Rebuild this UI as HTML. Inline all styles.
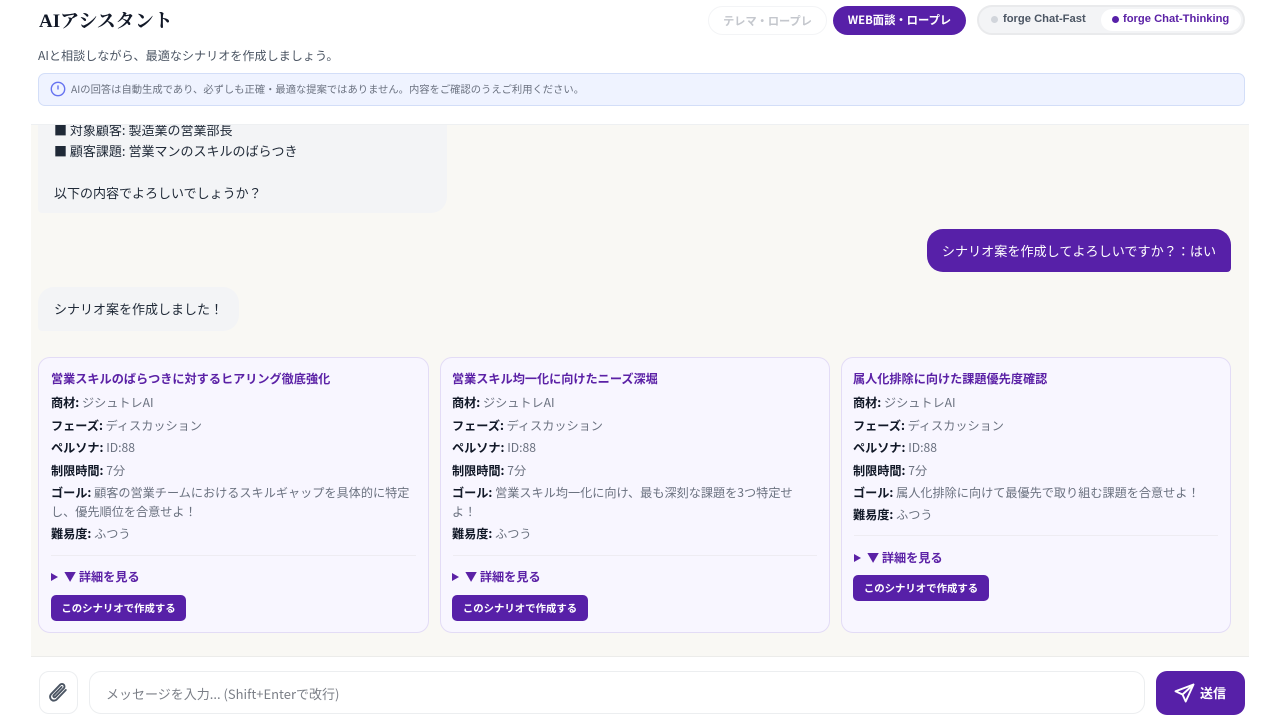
<!DOCTYPE html>
<html lang="ja"><head><meta charset="utf-8"><title>AIアシスタント</title>
<style>
*{box-sizing:border-box}
html,body{margin:0;padding:0;width:1280px;height:720px;overflow:hidden;background:#fff}
body{font-family:"Noto Sans CJK JP","Liberation Sans",sans-serif;color:#374151;position:relative}
.a{position:absolute;white-space:nowrap}
.l{font-family:"Liberation Sans","Noto Sans CJK JP",sans-serif}
.card{position:absolute;top:357px;width:391px;background:#f8f6ff;border:1px solid #e3dcf6;border-radius:12px}
.card .t{position:absolute;left:12px;top:12px;font-size:12.15px;line-height:18px;font-weight:700;color:#5b21a6;white-space:nowrap}
.card .r{position:absolute;left:12px;font-size:12.15px;line-height:19px;color:#6b7280;white-space:nowrap}
.card .r b{color:#111827}
.card .hr{position:absolute;left:12px;right:12px;height:1px;background:#eeecf2}
.card .d{position:absolute;left:12px;font-size:12.15px;line-height:18px;font-weight:700;color:#5b21a6;white-space:nowrap}
.card .d i{display:inline-block;width:0;height:0;border-left:7px solid #5b21a6;border-top:4px solid transparent;border-bottom:4px solid transparent;margin-right:6px}
.card .b{position:absolute;left:12px;width:135px;height:26px;border-radius:5px;background:#5720a8;color:#fff;font-size:10.4px;font-weight:700;line-height:26px;text-align:center}
</style></head><body>
<div class="a" style="left:39px;top:8px;font-family:'Liberation Serif','Noto Serif CJK SC',serif;font-size:19px;line-height:27px;font-weight:700;color:#111827">AIアシスタント</div>
<div class="a" style="left:38px;top:47px;font-size:12.1px;line-height:17px;color:#4b5563">AIと相談しながら、最適なシナリオを作成しましょう。</div>

<div class="a" style="left:708px;top:6px;width:119px;height:29px;border:1px solid #f3f4f6;border-radius:15px;font-size:11.2px;font-weight:700;line-height:28px;text-align:center;color:#c4c7cd">テレマ・ロープレ</div>
<div class="a" style="left:833px;top:6px;width:133px;height:29px;background:#5720a8;border-radius:15px;font-size:11.3px;font-weight:700;line-height:29px;text-align:center;color:#fff">WEB面談・ロープレ</div>
<div class="a" style="left:977px;top:5px;width:268px;height:30px;background:#f3f4f6;border:2px solid #e9eaec;border-radius:15px"></div>
<div class="a" style="left:1101px;top:9px;width:140px;height:22px;background:#fff;border-radius:11px"></div>
<div class="a" style="left:991px;top:16px;width:7px;height:7px;border-radius:50%;background:#d1d5db"></div>
<div class="a l" style="left:1003px;top:11px;font-size:11.2px;line-height:16px;font-weight:700;color:#4b5563">forge Chat-Fast</div>
<div class="a" style="left:1112px;top:16px;width:7px;height:7px;border-radius:50%;background:#5720a8"></div>
<div class="a l" style="left:1123px;top:11px;font-size:11.2px;line-height:16px;font-weight:700;color:#5b21a6">forge Chat-Thinking</div>

<div class="a" style="left:38px;top:73px;width:1207px;height:33px;background:#eff3ff;border:1px solid #d3def8;border-radius:7px"></div>
<svg class="a" style="left:50px;top:81px" width="16" height="16" viewBox="0 0 16 16" fill="none"><circle cx="8" cy="8" r="6.7" stroke="#6673f0" stroke-width="1.4"/><path d="M8 5V8" stroke="#6673f0" stroke-width="1.4" stroke-linecap="round"/></svg>
<div class="a" style="left:71px;top:81px;font-size:10.3px;line-height:15px;color:#6b7280">AIの回答は自動生成であり、必ずしも正確・最適な提案ではありません。内容をご確認のうえご利用ください。</div>

<div class="a" style="left:31px;top:124px;width:1218px;height:533px;background:#f9f8f4;border-top:1px solid #eef0f2;border-bottom:1px solid #ececea;overflow:hidden">
  <div class="a" style="left:7px;top:-40px;width:409px;height:128px;background:#f3f4f6;border-radius:16px 16px 16px 4px"></div>
  <div class="a" style="left:23px;top:-6px;font-size:13px;line-height:21px;color:#1f2937">■ 対象顧客: 製造業の営業部長<br>■ 顧客課題: 営業マンのスキルのばらつき<br><br>以下の内容でよろしいでしょうか？</div>
</div>
<div class="a" style="left:927px;top:229px;width:304px;height:43px;background:#5720a8;border-radius:16px 16px 4px 16px;color:#fff;font-size:13.1px;line-height:43px;text-align:center">シナリオ案を作成してよろしいですか？：はい</div>
<div class="a" style="left:38px;top:287px;width:201px;height:44px;background:#f3f4f6;border-radius:16px 16px 16px 4px;font-size:13px;line-height:44px;padding-left:16px;color:#1f2937">シナリオ案を作成しました！</div>

<div class="card" style="left:38px;height:276px">
  <div class="t">営業スキルのばらつきに対するヒアリング徹底強化</div>
  <div class="r" style="top:35px"><b>商材:</b> ジシュトレAI</div>
  <div class="r" style="top:58px"><b>フェーズ:</b> ディスカッション</div>
  <div class="r" style="top:80px"><b>ペルソナ:</b> ID:88</div>
  <div class="r" style="top:103px"><b>制限時間:</b> 7分</div>
  <div class="r" style="top:125px"><b>ゴール:</b> 顧客の営業チームにおけるスキルギャップを具体的に特定<br>し、優先順位を合意せよ！</div>
  <div class="r" style="top:166px"><b>難易度:</b> ふつう</div>
  <div class="hr" style="top:197px"></div>
  <div class="d" style="top:210px"><i></i>▼ 詳細を見る</div>
  <div class="b" style="top:237px">このシナリオで作成する</div>
</div>
<div class="card" style="left:440px;height:276px;width:390px">
  <div class="t" style="left:11px">営業スキル均一化に向けたニーズ深堀</div>
  <div class="r" style="top:35px;left:11px"><b>商材:</b> ジシュトレAI</div>
  <div class="r" style="top:58px;left:11px"><b>フェーズ:</b> ディスカッション</div>
  <div class="r" style="top:80px;left:11px"><b>ペルソナ:</b> ID:88</div>
  <div class="r" style="top:103px;left:11px"><b>制限時間:</b> 7分</div>
  <div class="r" style="top:125px;left:11px"><b>ゴール:</b> 営業スキル均一化に向け、最も深刻な課題を3つ特定せ<br>よ！</div>
  <div class="r" style="top:166px;left:11px"><b>難易度:</b> ふつう</div>
  <div class="hr" style="top:197px"></div>
  <div class="d" style="top:210px;left:11px"><i></i>▼ 詳細を見る</div>
  <div class="b" style="top:237px;left:11px;width:136px">このシナリオで作成する</div>
</div>
<div class="card" style="left:841px;height:276px;width:390px">
  <div class="t" style="left:11px">属人化排除に向けた課題優先度確認</div>
  <div class="r" style="top:35px;left:11px"><b>商材:</b> ジシュトレAI</div>
  <div class="r" style="top:58px;left:11px"><b>フェーズ:</b> ディスカッション</div>
  <div class="r" style="top:80px;left:11px"><b>ペルソナ:</b> ID:88</div>
  <div class="r" style="top:103px;left:11px"><b>制限時間:</b> 7分</div>
  <div class="r" style="top:125px;left:11px"><b>ゴール:</b> 属人化排除に向けて最優先で取り組む課題を合意せよ！</div>
  <div class="r" style="top:147px;left:11px"><b>難易度:</b> ふつう</div>
  <div class="hr" style="top:177px"></div>
  <div class="d" style="top:191px"><i></i>▼ 詳細を見る</div>
  <div class="b" style="top:217px;left:11px;width:136px">このシナリオで作成する</div>
</div>

<div class="a" style="left:39px;top:671px;width:39px;height:43px;background:#fff;border:1px solid #eceef0;border-radius:10px"></div>
<svg class="a" style="left:46px;top:681px" width="24" height="24" viewBox="0 0 20 20" fill="none" stroke="#4b5563" stroke-width="1.6" stroke-linecap="round" stroke-linejoin="round"><path d="M16.5 7.5l-7.6 7.9a3.2 3.2 0 0 1-4.6-4.5l7.5-7.8a2.1 2.1 0 0 1 3 3l-6.9 7.1a1 1 0 0 1-1.5-1.4l6.6-6.8"/></svg>
<div class="a" style="left:89px;top:671px;width:1056px;height:43px;background:#fff;border:1px solid #eceef0;border-radius:12px;font-size:13px;line-height:43px;padding-left:16px;color:#7b7f87">メッセージを入力... (Shift+Enterで改行)</div>
<div class="a" style="left:1156px;top:671px;width:89px;height:44px;background:#5720a8;border-radius:11px"></div>
<svg class="a" style="left:1174px;top:683px" width="21" height="21" viewBox="0 0 21 21" fill="none" stroke="#fff" stroke-width="1.9" stroke-linejoin="round" stroke-linecap="round"><path d="M19.5 1.5L1.5 8.3l7 3.2 3.2 7zM19.5 1.5L8.5 11.5"/></svg>
<div class="a" style="left:1200px;top:683px;font-size:13px;line-height:20px;font-weight:700;color:#fff">送信</div>
</body></html>
